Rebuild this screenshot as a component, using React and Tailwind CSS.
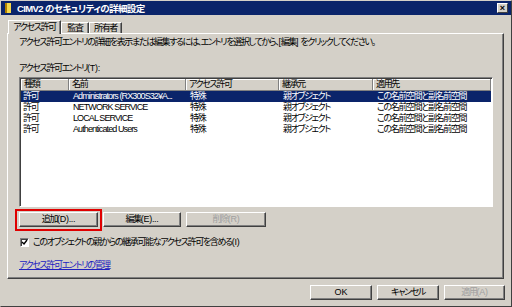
import React from "react";

const rows = [
    { type: "許可", name: "Administrators (RX300S32¥A...", perm: "特殊", from: "親オブジェクト", to: "この名前空間と副名前空間" },
    { type: "許可", name: "NETWORK SERVICE", perm: "特殊", from: "親オブジェクト", to: "この名前空間と副名前空間" },
    { type: "許可", name: "LOCAL SERVICE", perm: "特殊", from: "親オブジェクト", to: "この名前空間と副名前空間" },
    { type: "許可", name: "Authenticated Users", perm: "特殊", from: "親オブジェクト", to: "この名前空間と副名前空間" },
];

// latin bits inside japanese strings need less negative tracking
function L({ children }) {
    return <span className="tracking-[-0.3px]">{children}</span>;
}

function Btn({ children, disabled, className = "" }) {
    return (
        <div
            className={
                "flex h-[15px] items-center justify-center border border-t-white border-l-white border-r-[#404040] border-b-[#404040] bg-[#d4d0c8] shadow-[inset_-1px_-1px_0_#808080] " +
                (disabled ? "text-[#a0a0a0] " : "text-black ") +
                className
            }
        >
            {children}
        </div>
    );
}

function HeadCell({ children, w }) {
    return (
        <div
            className="flex h-[12px] items-center border-r border-b border-r-[#808080] border-b-[#808080] bg-[#d4d0c8] pl-[3px] shadow-[inset_1px_1px_0_#fff]"
            style={{ width: w }}
        >
            {children}
        </div>
    );
}

const widths = [48, 117, 93, 94, 118];

export default function App() {
    return (
        <div className="flex h-[307px] w-[512px] flex-col overflow-hidden whitespace-nowrap border border-t-[#d4d0c8] border-l-[#d4d0c8] border-r-[#404040] border-b-[#404040] bg-[#d4d0c8] font-['Liberation_Sans','Noto_Sans_CJK_JP',sans-serif] text-[9px] leading-[11px] tracking-[-1.35px] text-black [font-feature-settings:'palt']">
            {/* title bar */}
            <div className="flex h-[14px] shrink-0 items-center bg-[#0a246a] pl-[4px] pr-[3px]">
                <div className="mr-[6px] h-[10px] w-[6px] border-l-2 border-l-[#b08000] bg-[#f5d84a]" />
                <span className="text-[9.5px] font-bold tracking-[-0.6px] text-white">CIMV2 のセキュリティの詳細設定</span>
                <div className="ml-auto flex h-[10px] w-[11px] items-center justify-center border border-t-white border-l-white border-r-[#404040] border-b-[#404040] bg-[#d4d0c8] text-[9px] leading-none font-bold tracking-normal text-black">
                    ×
                </div>
            </div>

            {/* tabs */}
            <div className="mt-[5px] flex items-end pl-[7px]">
                <div className="relative z-10 -mb-px flex h-[14px] w-[53px] items-center justify-center border border-b-0 border-t-white border-l-white border-r-[#404040] bg-[#d4d0c8] shadow-[inset_-1px_0_0_#808080]">
                    アクセス許可
                </div>
                <div className="flex h-[11px] w-[28px] items-center justify-center border border-b-0 border-t-white border-l-white border-r-[#404040] shadow-[inset_-1px_0_0_#808080]">
                    監査
                </div>
                <div className="flex h-[11px] w-[33px] items-center justify-center border border-b-0 border-t-white border-l-white border-r-[#404040] shadow-[inset_-1px_0_0_#808080]">
                    所有者
                </div>
            </div>

            {/* panel */}
            <div className="ml-[6px] flex h-[246px] w-[497px] shrink-0 flex-col border border-t-white border-l-white border-r-[#404040] border-b-[#404040] pl-[11px] pt-[3px] shadow-[inset_-1px_-1px_0_#808080]">
                <div className="h-[12px]">
                    アクセス許可エントリの詳細を表示または編集するには、エントリを選択してから、<L>[</L>編集<L>] </L>をクリックしてください。
                </div>
                <div className="mt-[14px] h-[12px]">アクセス許可エントリ<L>(T):</L></div>

                <div className="mt-[2px] h-[130px] w-[474px] border border-t-[#808080] border-l-[#808080] border-r-white border-b-white bg-white p-px shadow-[inset_1px_1px_0_#404040]">
                    <div className="flex">
                        <HeadCell w={widths[0]}>種類</HeadCell>
                        <HeadCell w={widths[1]}>名前</HeadCell>
                        <HeadCell w={widths[2]}>アクセス許可</HeadCell>
                        <HeadCell w={widths[3]}>継承元</HeadCell>
                        <HeadCell w={widths[4]}>適用先</HeadCell>
                    </div>
                    {rows.map((r, i) => (
                        <div
                            key={i}
                            className={
                                i === 0
                                    ? "flex h-[11px] items-center bg-[#0a246a] text-white"
                                    : "flex h-[11px] items-center"
                            }
                        >
                            <div className="overflow-hidden pl-[2px]" style={{ width: widths[0] }}>{r.type}</div>
                            <div className="overflow-hidden pl-[4px] tracking-[-0.9px]" style={{ width: widths[1] }}>{r.name}</div>
                            <div className="overflow-hidden pl-[4px]" style={{ width: widths[2] }}>{r.perm}</div>
                            <div className="overflow-hidden pl-[4px]" style={{ width: widths[3] }}>{r.from}</div>
                            <div className="overflow-hidden pl-[4px]" style={{ width: widths[4] }}>{r.to}</div>
                        </div>
                    ))}
                </div>

                <div className="mt-[5px] flex gap-[5px]">
                    <div className="relative">
                        <Btn className="w-[79px]">追加<L>(D)...</L></Btn>
                        <div className="absolute -top-[3px] -left-[4px] h-[22px] w-[87px] border-2 border-[#e00000]" />
                    </div>
                    <Btn className="w-[78px]">編集<L>(E)...</L></Btn>
                    <Btn className="w-[80px]" disabled>削除<L>(R)</L></Btn>
                </div>

                <div className="mt-[9px] flex h-[12px] items-center">
                    <div className="ml-[1px] mr-[4px] flex h-[9px] w-[9px] items-center justify-center border border-t-[#808080] border-l-[#808080] border-r-white border-b-white bg-white shadow-[inset_1px_1px_0_#404040]">
                        <svg width="7" height="7" viewBox="0 0 7 7">
                            <path d="M1 3 L3 5 L6 1" stroke="#000" strokeWidth="1.4" fill="none" />
                        </svg>
                    </div>
                    このオブジェクトの親からの継承可能なアクセス許可を含める<L>(I)</L>
                </div>

                <div className="mt-[12px] h-[12px]">
                    <span className="text-[#2020c0] underline">アクセス許可エントリの管理</span>
                </div>
            </div>

            {/* bottom buttons */}
            <div className="mt-[6px] flex justify-end gap-[5px] pr-[6px]">
                <Btn className="h-[14px] w-[62px] tracking-normal">OK</Btn>
                <Btn className="h-[14px] w-[62px]">キャンセル</Btn>
                <Btn className="h-[14px] w-[61px]" disabled>適用<L>(A)</L></Btn>
            </div>
        </div>
    );
}
